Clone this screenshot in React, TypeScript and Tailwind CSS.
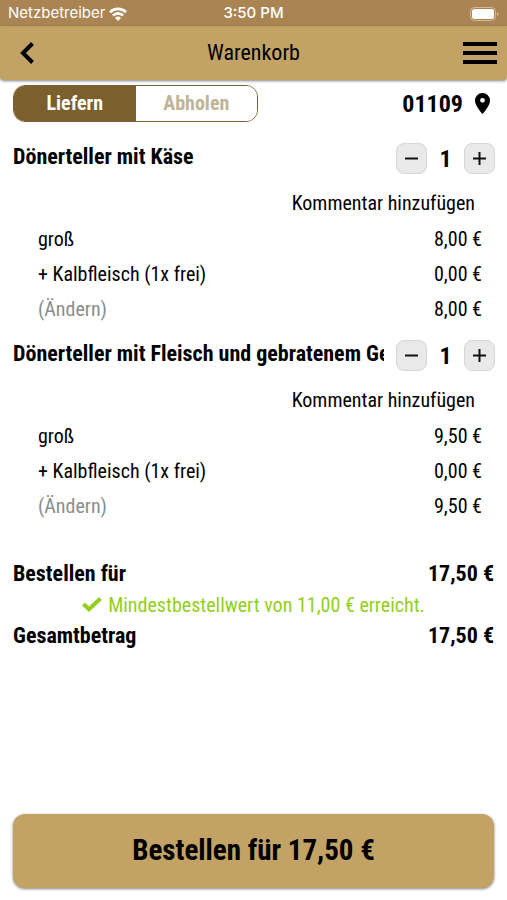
import { useState } from "react";

type OrderLine = { label: string; price: string };
type CartItem = { id: number; name: string; total: string; lines: OrderLine[] };

const items: CartItem[] = [
  {
    id: 1,
    name: "Dönerteller mit Käse",
    total: "8,00 €",
    lines: [
      { label: "groß", price: "8,00 €" },
      { label: "+ Kalbfleisch (1x frei)", price: "0,00 €" },
    ],
  },
  {
    id: 2,
    name: "Dönerteller mit Fleisch und gebratenem Gemüse",
    total: "9,50 €",
    lines: [
      { label: "groß", price: "9,50 €" },
      { label: "+ Kalbfleisch (1x frei)", price: "0,00 €" },
    ],
  },
];

function StatusBar() {
  return (
    <div className="grid h-[26px] grid-cols-[1fr_auto_1fr] items-center bg-[#ab8453] px-2 pt-px font-['Inter','Liberation_Sans',sans-serif] text-[15px] text-white">
      <div className="flex items-center gap-1">
        <span>Netzbetreiber</span>
        <svg width="18" height="14" viewBox="0 0 18 14" fill="none" stroke="currentColor" strokeWidth="2.6" aria-hidden="true">
          <path d="M1 5.200a11.400 11.400 0 0 1 16 0" />
          <path d="M3.900 8.500a7.200 7.200 0 0 1 10.200 0" />
          <path d="M9 14 6 11a4.300 4.300 0 0 1 6 0Z" fill="currentColor" stroke="none" />
        </svg>
      </div>
      <span className="text-center font-medium">3:50 PM</span>
      <svg className="justify-self-end" width="29" height="14" viewBox="0 0 29 14" aria-hidden="true">
        <rect x="0.5" y="0.5" width="25" height="13" rx="4" fill="none" stroke="#d9b995" />
        <rect x="2" y="2" width="22" height="10" rx="2.500" fill="#fff" />
        <path d="M27 5v4c1-.500 1.600-1.200 1.600-2S28 5.500 27 5Z" fill="#d9b995" />
      </svg>
    </div>
  );
}

function Header() {
  return (
    <header className="grid h-[54px] grid-cols-[1fr_auto_1fr] items-center rounded-b-[4px] bg-[#c2a365] px-[10px] shadow-[0_1px_3px_rgba(0,0,0,0.5)]">
      <button type="button" aria-label="Zurück" className="justify-self-start pl-2">
        <svg width="20" height="24" viewBox="0 0 20 24" fill="none" stroke="#000" strokeWidth="4" aria-hidden="true">
          <path d="M14.500 2.500 5 12l9.500 9.500" />
        </svg>
      </button>
      <h1 className="pb-0.5 text-center text-[22px]">Warenkorb</h1>
      <button type="button" aria-label="Menü" className="justify-self-end">
        <svg width="34" height="24" viewBox="0 0 34 24" fill="#000" aria-hidden="true">
          <path d="M0 1h34v4H0zM0 10h34v4H0zM0 19h34v4H0z" />
        </svg>
      </button>
    </header>
  );
}

function StepButton({ plus, label, onClick }: { plus?: boolean; label: string; onClick: () => void }) {
  return (
    <button
      type="button"
      aria-label={label}
      onClick={onClick}
      className="flex size-[31px] items-center justify-center rounded-lg border border-[#d6d6d6] bg-[#e9e9e9]"
    >
      <svg width="13" height="13" viewBox="0 0 13 13" stroke="#111" strokeWidth="2" aria-hidden="true">
        <path d={plus ? "M0 6.500h13M6.500 0v13" : "M0 6.500h13"} />
      </svg>
    </button>
  );
}

function CartEntry({ item }: { item: CartItem }) {
  const [count, setCount] = useState(1);

  return (
    <section>
      <div className="flex h-[55px] items-center gap-3 pt-0.5 pr-3 pl-[13px]">
        <h2 className="min-w-0 flex-1 overflow-hidden pb-1 text-[22px] font-bold whitespace-nowrap">{item.name}</h2>
        <div className="flex items-center">
          <StepButton label="Weniger" onClick={() => setCount(Math.max(1, count - 1))} />
          <span className="w-[37px] text-center text-2xl font-bold">{count}</span>
          <StepButton plus label="Mehr" onClick={() => setCount(count + 1)} />
        </div>
      </div>
      <div className="flex h-9 items-center justify-end pr-8 text-xl">
        <button type="button">Kommentar hinzufügen</button>
      </div>
      <div className="pr-[25px] pl-[38px] text-xl">
        {item.lines.map((line) => (
          <div key={line.label} className="flex h-[35px] items-center justify-between">
            <span>{line.label}</span>
            <span>{line.price}</span>
          </div>
        ))}
        <div className="flex h-9 items-center justify-between">
          <button type="button" className="text-[#8c8c8c]">(Ändern)</button>
          <span>{item.total}</span>
        </div>
      </div>
    </section>
  );
}

export default function App() {
  const [mode, setMode] = useState("liefern");
  const active = "bg-[#7b602e] text-white";
  const inactive = "bg-white text-[#beb496]";

  return (
    <div className="flex min-h-screen flex-col bg-white font-['Roboto_Condensed','Roboto',sans-serif] text-black">
      <StatusBar />
      <Header />

      <div className="flex h-[50px] items-center justify-between pt-[5px] pr-[17px] pb-2 pl-[13px]">
        <div className="flex h-[37px] w-[245px] overflow-hidden rounded-xl border border-[#7b602e] text-xl font-bold">
          <button
            type="button"
            aria-pressed={mode === "liefern"}
            onClick={() => setMode("liefern")}
            className={`flex-1 pb-0.5 ${mode === "liefern" ? active : inactive}`}
          >
            Liefern
          </button>
          <button
            type="button"
            aria-pressed={mode === "abholen"}
            onClick={() => setMode("abholen")}
            className={`flex-1 pb-0.5 ${mode === "abholen" ? active : inactive}`}
          >
            Abholen
          </button>
        </div>
        <button type="button" className="flex items-center gap-3 text-2xl font-bold">
          01109
          <svg width="15" height="21" viewBox="0 0 15 21" aria-hidden="true">
            <path
              fillRule="evenodd"
              d="M7.500 0A7.400 7.400 0 0 0 0 7.400C0 12.800 7.500 21 7.500 21S15 12.800 15 7.400A7.400 7.400 0 0 0 7.500 0Zm0 9.700a2.400 2.400 0 1 1 0-4.800 2.400 2.400 0 0 1 0 4.800Z"
            />
          </svg>
        </button>
      </div>

      <main>
        {items.map((item) => (
          <CartEntry key={item.id} item={item} />
        ))}
      </main>

      {/* Totals */}
      <div className="px-[13px] pt-[34px]">
        <div className="flex h-[31px] items-center justify-between text-[22px] font-bold">
          <span>Bestellen für</span>
          <span>17,50 €</span>
        </div>
        <p className="flex h-[31px] items-center justify-center gap-1.5 text-xl text-[#92cf1c]">
          <svg width="20" height="15" viewBox="0 0 20 15" fill="none" stroke="currentColor" strokeWidth="4" aria-hidden="true">
            <path d="m1.500 7 5.500 5.200L18.500 1.500" />
          </svg>
          Mindestbestellwert von 11,00 € erreicht.
        </p>
        <div className="flex h-[31px] items-center justify-between text-[22px] font-bold">
          <span>Gesamtbetrag</span>
          <span>17,50 €</span>
        </div>
      </div>

      <div className="mt-auto px-[13px] pt-6 pb-3">
        <button
          type="button"
          className="h-[74px] w-full rounded-xl bg-[#c2a365] text-[29px] font-bold shadow-[0_1px_3px_rgba(0,0,0,0.5)]"
        >
          Bestellen für 17,50 €
        </button>
      </div>
    </div>
  );
}
